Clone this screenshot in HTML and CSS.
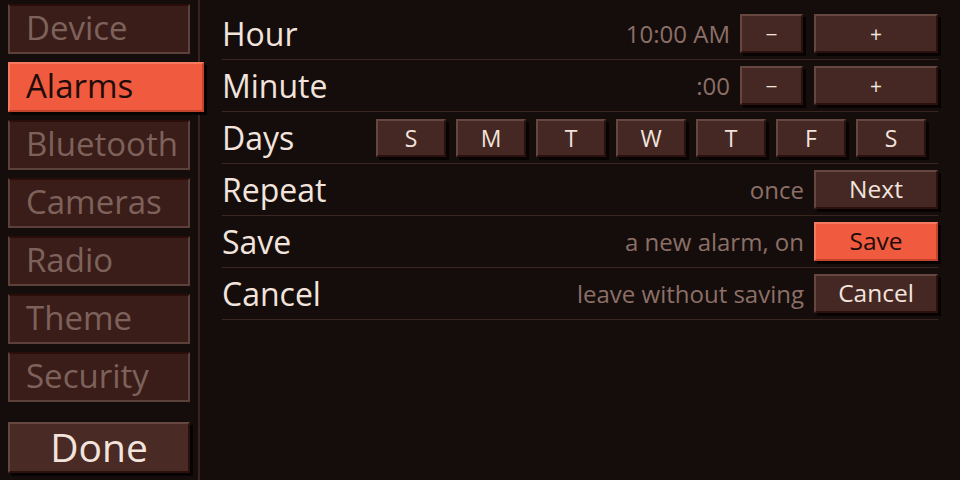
FILE: index.html
```html
<!DOCTYPE html>
<html>
<head>
<meta charset="utf-8">
<link rel="stylesheet" href="styles.css">
</head>
<body>
<div class="app">
  <nav class="sidebar">
    <div class="tab">Device</div>
    <div class="tab active">Alarms</div>
    <div class="tab">Bluetooth</div>
    <div class="tab">Cameras</div>
    <div class="tab">Radio</div>
    <div class="tab">Theme</div>
    <div class="tab">Security</div>
    <div class="done btn">Done</div>
  </nav>
  <main class="content">
    <div class="row">
      <div class="label">Hour</div>
      <div class="value">10:00 AM</div>
      <div class="btn small">−</div>
      <div class="btn wide">+</div>
    </div>
    <div class="row">
      <div class="label">Minute</div>
      <div class="value">:00</div>
      <div class="btn small">−</div>
      <div class="btn wide">+</div>
    </div>
    <div class="row">
      <div class="label">Days</div>
      <div class="days">
        <div class="btn day">S</div>
        <div class="btn day">M</div>
        <div class="btn day">T</div>
        <div class="btn day">W</div>
        <div class="btn day">T</div>
        <div class="btn day">F</div>
        <div class="btn day">S</div>
      </div>
    </div>
    <div class="row">
      <div class="label">Repeat</div>
      <div class="value">once</div>
      <div class="btn wide text">Next</div>
    </div>
    <div class="row">
      <div class="label">Save</div>
      <div class="value">a new alarm, on</div>
      <div class="btn wide text primary">Save</div>
    </div>
    <div class="row">
      <div class="label">Cancel</div>
      <div class="value">leave without saving</div>
      <div class="btn wide text">Cancel</div>
    </div>
  </main>
</div>
</body>
</html>
```
FILE: styles.css
```css
* { box-sizing: border-box; }
html, body {
  margin: 0;
  padding: 0;
  background: #150d0b;
  font-family: "Open Sans", "Noto Sans", sans-serif;
  color: #f2e4dc;
}
.app {
  display: flex;
  width: 960px;
  height: 480px;
}
.sidebar {
  width: 200px;
  flex: none;
  border-right: 2px solid #3a221e;
  padding: 4px 0 7px 8px;
  display: flex;
  flex-direction: column;
  gap: 8px;
}
.tab {
  width: 182px;
  height: 50px;
  background: #3a1d19;
  border: 2px solid #5c413b;
  border-top-color: #2b0d09;
  color: #7d625b;
  font-size: 33px;
  line-height: 44px;
  padding-left: 16px;
  white-space: nowrap;
}
.tab.active {
  width: 196px;
  background: #f05a3e;
  border-color: #f47a60 #c4432b #c4432b #f47a60;
  color: #1e0c0a;
  box-shadow: 3px 3px 0 #070302;
  position: relative;
  z-index: 1;
}
.btn {
  background: #452823;
  border: 2px solid;
  border-color: #65473f #2b110d #2b110d #65473f;
  box-shadow: 3px 3px 0 #070302;
  color: #f2e4dc;
  display: flex;
  align-items: center;
  justify-content: center;
  height: 39px;
  font-size: 21px;
  flex: none;
}
.done {
  margin-top: auto;
  width: 182px;
  height: 51px;
  background: #4a2a25;
  font-size: 39px;
  line-height: 1;
  padding-bottom: 3px;
}
.content {
  flex: 1;
  padding: 8px 22px 0 22px;
}
.row {
  display: flex;
  align-items: center;
  height: 52px;
  padding: 6px 0;
  border-bottom: 1px solid #3a2521;
}
.label {
  flex: 1;
  font-size: 32px;
  line-height: 39px;
  color: #f2e4dc;
}
.value {
  font-size: 24px;
  color: #8c6f67;
  margin-right: 10px;
  white-space: nowrap;
}
.btn.small { width: 63px; margin-right: 11px; }
.btn.wide { width: 124px; }
.btn.text { font-size: 24.5px; padding-bottom: 2px; }
.btn.primary {
  background: #f05a3e;
  border-color: #f47a60 #c4432b #c4432b #f47a60;
  color: #1e0c0a;
}
.days {
  display: flex;
  gap: 10px;
  margin-right: 12px;
}
.btn.day { width: 70px; height: 38px; font-size: 23px; }
```
